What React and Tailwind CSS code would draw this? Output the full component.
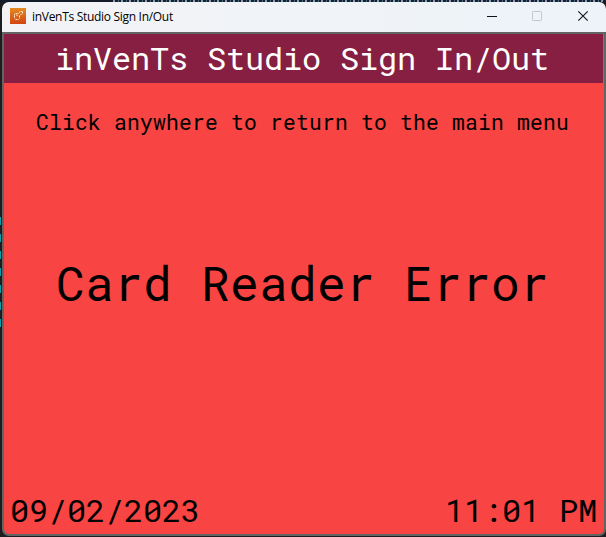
import React from 'react';

const MONO = "font-['Roboto_Mono','DejaVu_Sans_Mono',monospace]";

function TitleBar() {
  return (
    <div className="flex h-[30px] shrink-0 items-center rounded-tl-[7px] rounded-tr-[7px] bg-linear-to-r from-[#f3f3f6] to-[#edf3f9] pb-[2px] pl-[8px]">
      <svg width="16" height="16" viewBox="0 0 16 16">
        <defs>
          <linearGradient id="badge" x1="0" y1="0" x2="0" y2="1">
            <stop offset="0" stopColor="#e38b20" />
            <stop offset="1" stopColor="#d24512" />
          </linearGradient>
        </defs>
        <rect width="16" height="16" fill="url(#badge)" />
        <path d="M4.500 6v4.500M5.500 5.500h3M5.500 11.500h3M9.500 7.500v3M7 6.500v2M9 4.500l1.500-1M11 3.500h2M12.500 4v2M10.500 6.500h1" fill="none" stroke="#fff1df" strokeWidth="1" strokeDasharray="1.6 .5" />
      </svg>
      <span className="ml-[6px] mt-px w-[142px] whitespace-nowrap font-['Open_Sans','Noto_Sans',sans-serif] text-[12px] leading-[16px] tracking-[-0.3px] text-black">
        inVenTs Studio Sign In/Out
      </span>
      <svg width="102" height="12" viewBox="0 0 102 12" className="ml-auto mr-[17px]" fill="none">
        <path d="M0 6.500h10" stroke="#111" />
        <rect x="45.500" y="1.500" width="9" height="9" rx="0.800" stroke="#c3c6ca" />
        <path d="m91.300 1.300 9.400 9.400m0-9.400-9.400 9.400" stroke="#15171a" strokeWidth="1.150" />
      </svg>
    </div>
  );
}

export default function App() {
  return (
    <div className="flex h-[537px] w-[606px] flex-col overflow-hidden bg-[#1d1d20]">
      <div className="h-[2px] shrink-0 overflow-hidden bg-[#141c2c] pl-[113px]">
        <div className="h-[2px] bg-[repeating-linear-gradient(90deg,#8d9aa5_0_2px,#172033_2px_5px,#466b85_5px_6px,#172033_6px_8px)]" />
      </div>
      <div className="flex min-h-0 flex-1">
        <div className="flex w-[2px] shrink-0 flex-col gap-[9px] pt-[215px]">
          {[0, 1, 2, 3, 4, 5, 6].map((n) => (
            <i key={n} className="block h-[8px] w-px shrink-0 bg-[#0a9faa]" />
          ))}
        </div>
        <div className="mb-[1px] flex min-w-0 flex-1 flex-col">
          <TitleBar />
          <div className="flex flex-1 flex-col overflow-hidden rounded-b-[7px] border-2 border-[#646464] bg-[#f84442]">
            <header className={`mr-px flex h-[49px] shrink-0 items-center justify-center whitespace-pre bg-[#861f41] pb-[2px] pr-[3px] text-[32px] leading-[42px] tracking-[-0.200px] text-white ${MONO}`}>
              inVenTs Studio Sign In/Out
            </header>
            <p className={`mt-[25px] whitespace-pre pr-[3px] text-center text-[21.300px] leading-[28px] tracking-[0.220px] text-black ${MONO}`}>
              Click anywhere to return to the main menu
            </p>
            <main className={`flex flex-1 items-center justify-center whitespace-pre pb-[60px] pr-[3px] text-[48px] leading-[64px] tracking-[0.200px] text-black ${MONO}`}>
              Card Reader Error
            </main>
            <footer className={`flex h-[45px] shrink-0 items-start justify-between pl-[6px] pr-[7px] text-[32px] leading-[42px] tracking-[-0.200px] text-black ${MONO}`}>
              <span>09/02/2023</span>
              <span>11:01 PM</span>
            </footer>
          </div>
        </div>
      </div>
    </div>
  );
}
